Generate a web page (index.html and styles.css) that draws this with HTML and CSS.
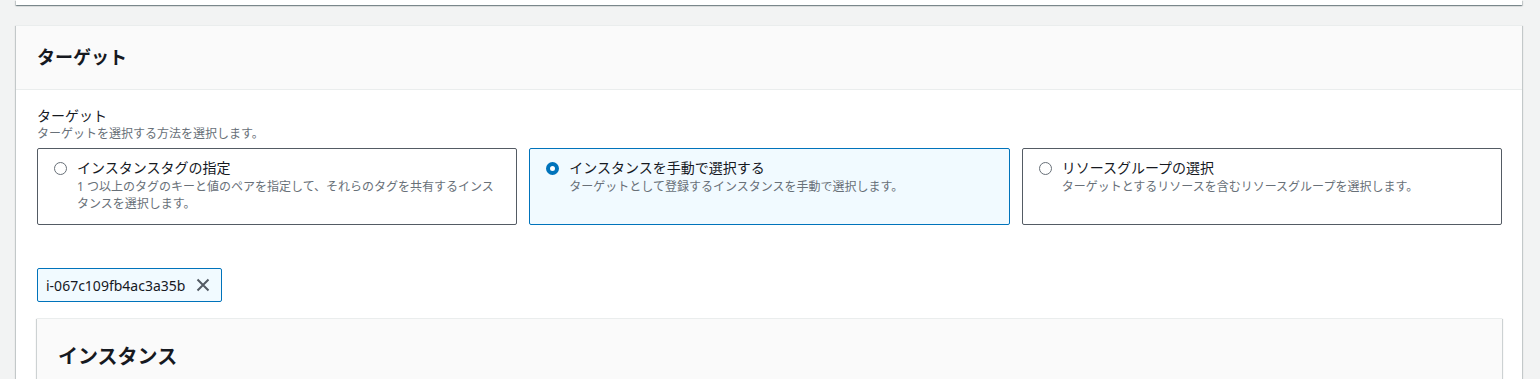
FILE: index.html
```html
<!DOCTYPE html>
<html lang="ja">
<head>
    <meta charset="UTF-8">
    <meta name="viewport" content="width=device-width, initial-scale=1.0">
    <title>ターゲット</title>
    <link rel="stylesheet" href="styles.css">
</head>
<body>
    <div class="page">
        <div class="card card-prev"></div>

        <div class="card">
            <div class="card-header">
                <h2>ターゲット</h2>
            </div>
            <div class="card-body">
                <div class="field-label">ターゲット</div>
                <div class="field-desc">ターゲットを選択する方法を選択します。</div>

                <div class="tiles">
                    <label class="tile">
                        <span class="radio"></span>
                        <span class="tile-text">
                            <span class="tile-title">インスタンスタグの指定</span>
                            <span class="tile-desc">1 つ以上のタグのキーと値のペアを指定して、それらのタグを共有するインスタンスを選択します。</span>
                        </span>
                    </label>
                    <label class="tile selected">
                        <span class="radio checked"></span>
                        <span class="tile-text">
                            <span class="tile-title">インスタンスを手動で選択する</span>
                            <span class="tile-desc">ターゲットとして登録するインスタンスを手動で選択します。</span>
                        </span>
                    </label>
                    <label class="tile">
                        <span class="radio"></span>
                        <span class="tile-text">
                            <span class="tile-title">リソースグループの選択</span>
                            <span class="tile-desc">ターゲットとするリソースを含むリソースグループを選択します。</span>
                        </span>
                    </label>
                </div>

                <div class="tokens">
                    <div class="token">
                        <span>i-067c109fb4ac3a35b</span>
                        <svg class="token-dismiss" width="16" height="16" viewBox="0 0 16 16">
                            <path d="M2.5 2.5l11 11M13.5 2.5l-11 11" fill="none" stroke="#545b64" stroke-width="2"/>
                        </svg>
                    </div>
                </div>

                <div class="inner-card">
                    <h2>インスタンス</h2>
                </div>
            </div>
        </div>
    </div>
</body>
</html>
```

FILE: styles.css
```css
/* General Reset */
* {
    margin: 0;
    padding: 0;
    box-sizing: border-box;
}

body {
    font-family: 'Noto Sans', 'Noto Sans CJK JP', sans-serif;
    background: #f2f3f3;
    color: #16191f;
    font-size: 14px;
    overflow: hidden;
}

.page {
    padding: 0 18px 0 16px;
}

.card {
    background: #ffffff;
    box-shadow: 0 1px 1px 0 rgba(0, 28, 36, 0.3), 1px 1px 1px 0 rgba(0, 28, 36, 0.15), -1px 1px 1px 0 rgba(0, 28, 36, 0.15);
    border-top: 1px solid #eaeded;
    margin-bottom: 20px;
}

.card-prev {
    height: 5px;
    border-top: none;
}

.card-header {
    background: #fafafa;
    border-bottom: 1px solid #eaeded;
    padding: 19px 21px 20px;
}

.card-header h2 {
    font-size: 18px;
    line-height: 24px;
    font-weight: bold;
}

.card-body {
    padding: 16px 20px 40px 21px;
}

.field-label {
    font-size: 14px;
    line-height: 20px;
}

.field-desc {
    font-size: 12px;
    line-height: 16px;
    color: #687078;
}

.tiles {
    display: grid;
    grid-template-columns: repeat(3, 1fr);
    gap: 12px;
    margin-top: 6px;
}

.tile {
    display: flex;
    align-items: flex-start;
    gap: 10px;
    border: 1px solid #545b64;
    border-radius: 2px;
    padding: 9px 16px 12px;
    background: #ffffff;
    min-height: 75px;
}

.tile.selected {
    border-color: #0073bb;
    background: #f1faff;
}

.radio {
    flex: none;
    width: 13px;
    height: 13px;
    margin-top: 4px;
    border: 1.5px solid #687078;
    border-radius: 50%;
    background: #ffffff;
}

.radio.checked {
    border: 4px solid #0073bb;
}

.tile-text {
    display: flex;
    flex-direction: column;
}

.tile-title {
    font-size: 14px;
    line-height: 20px;
}

.tile-desc {
    font-size: 12px;
    line-height: 17px;
    color: #687078;
}

.tokens {
    display: flex;
    margin-top: 43px;
}

.token {
    display: flex;
    align-items: center;
    gap: 10px;
    height: 34px;
    padding: 0 10px 0 8px;
    border: 1px solid #0073bb;
    border-radius: 2px;
    background: #f1faff;
    font-size: 14px;
}

.token-dismiss {
    display: block;
}

.inner-card {
    margin-top: 16px;
    background: #fafafa;
    border-top: 1px solid #eaeded;
    box-shadow: 0 1px 1px 0 rgba(0, 28, 36, 0.3), 1px 1px 1px 0 rgba(0, 28, 36, 0.15), -1px 1px 1px 0 rgba(0, 28, 36, 0.15);
    padding: 24px 21px;
    height: 120px;
}

.inner-card h2 {
    font-size: 20px;
    line-height: 28px;
    font-weight: bold;
}
```
